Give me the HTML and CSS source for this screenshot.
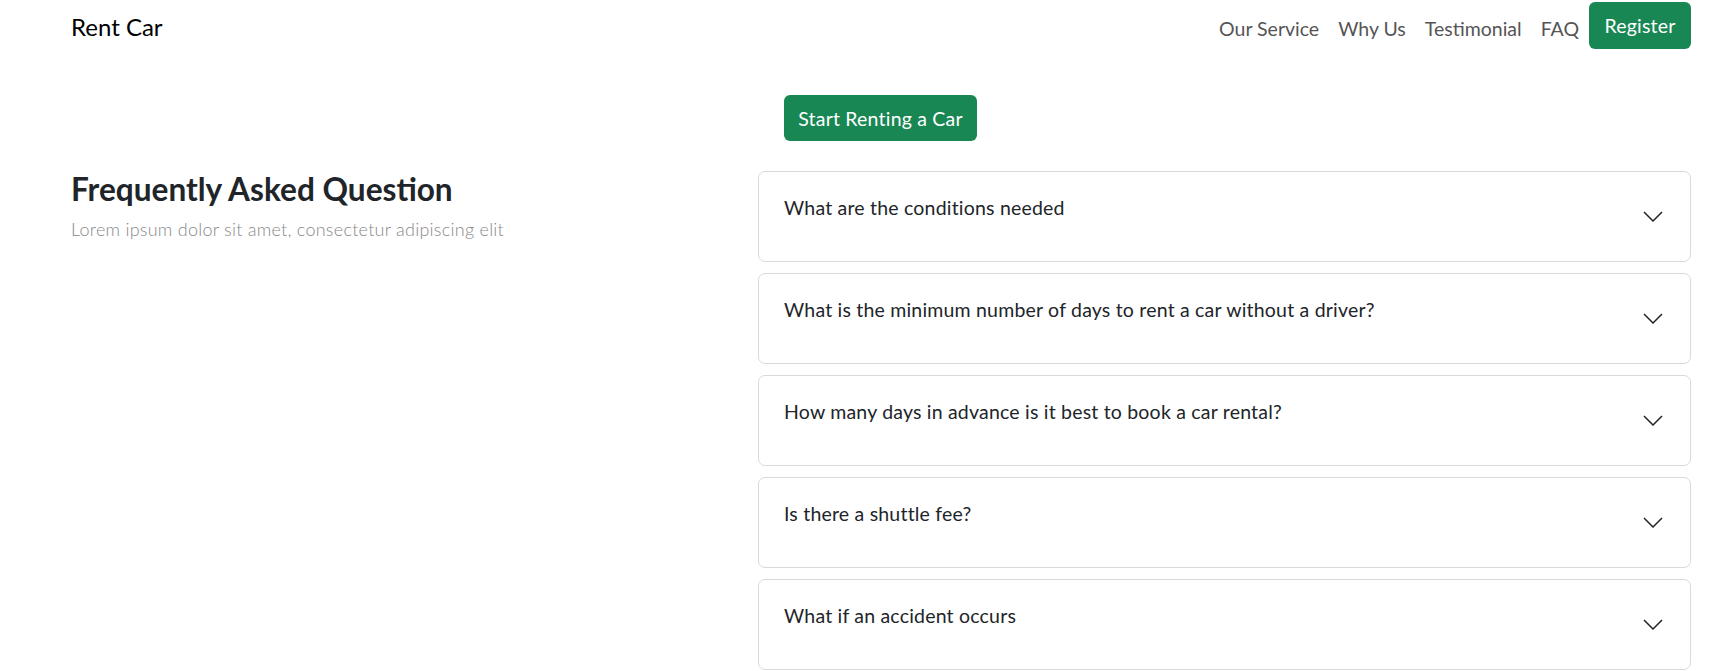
FILE: index.html
```html
<!DOCTYPE html>
<html lang="en">
<head>
<meta charset="utf-8">
<title>Rent Car</title>
<link rel="stylesheet" href="styles.css">
</head>
<body>
<header class="navbar">
  <a class="brand" href="#">Rent Car</a>
  <nav class="nav">
    <a class="nav-link" href="#">Our Service</a>
    <a class="nav-link" href="#">Why Us</a>
    <a class="nav-link" href="#">Testimonial</a>
    <a class="nav-link nav-link-last" href="#">FAQ</a>
    <a class="btn btn-register" href="#">Register</a>
  </nav>
</header>
<main class="page">
  <div class="cta-row">
    <a class="btn btn-cta" href="#">Start Renting a Car</a>
  </div>
  <section class="faq">
    <div class="faq-intro">
      <h2 class="faq-title">Frequently Asked Question</h2>
      <p class="faq-sub">Lorem ipsum dolor sit amet, consectetur adipiscing elit</p>
    </div>
    <div class="faq-list">
      <div class="faq-item"><span class="faq-q">What are the conditions needed</span><svg class="chev" viewBox="0 0 20 11"><path d="M1 1l9 9 9-9"/></svg></div>
      <div class="faq-item"><span class="faq-q">What is the minimum number of days to rent a car without a driver?</span><svg class="chev" viewBox="0 0 20 11"><path d="M1 1l9 9 9-9"/></svg></div>
      <div class="faq-item"><span class="faq-q">How many days in advance is it best to book a car rental?</span><svg class="chev" viewBox="0 0 20 11"><path d="M1 1l9 9 9-9"/></svg></div>
      <div class="faq-item"><span class="faq-q">Is there a shuttle fee?</span><svg class="chev" viewBox="0 0 20 11"><path d="M1 1l9 9 9-9"/></svg></div>
      <div class="faq-item"><span class="faq-q">What if an accident occurs</span><svg class="chev" viewBox="0 0 20 11"><path d="M1 1l9 9 9-9"/></svg></div>
    </div>
  </section>
</main>
</body>
</html>
```

FILE: styles.css
```css
* { box-sizing: border-box; }
body {
  margin: 0;
  font-family: "Lato", "Liberation Sans", sans-serif;
  color: #212529;
  background: #fff;
}
a { text-decoration: none; }
.navbar {
  display: flex;
  justify-content: space-between;
  align-items: center;
  height: 51px;
  padding: 2px 33px 0 71px;
}
.brand {
  color: #000;
  font-size: 24px;
  line-height: 1;
}
.nav {
  display: flex;
  align-items: center;
  gap: 19px;
}
.nav-link {
  color: #555;
  font-size: 19.5px;
  padding-top: 3px;
}
.nav-link-last { margin-right: -9px; }
.btn {
  display: inline-flex;
  align-items: center;
  justify-content: center;
  background: #198754;
  color: #fff;
  border-radius: 6px;
  font-size: 19.5px;
  letter-spacing: 0.2px;
}
.btn-register {
  width: 102px;
  height: 47px;
  margin-top: -2px;
}
.page {
  padding: 0 33px 0 71px;
}
.cta-row {
  padding: 44px 0 0 713px;
}
.btn-cta {
  width: 193px;
  height: 46px;
}
.faq {
  display: grid;
  grid-template-columns: 687px 1fr;
  margin-top: 30px;
}
.faq-title {
  margin: 0;
  font-size: 31.6px;
  font-weight: 700;
  line-height: 36px;
}
.faq-sub {
  margin: 11px 0 0;
  font-size: 18px;
  font-weight: 300;
  letter-spacing: 0.25px;
  color: #888;
}
.faq-list {
  display: flex;
  flex-direction: column;
  gap: 11px;
}
.faq-item {
  display: flex;
  justify-content: space-between;
  align-items: flex-start;
  height: 91px;
  border: 1px solid #dadada;
  border-radius: 7px;
  padding: 24px 27px 0 25px;
}
.faq-q {
  font-size: 19.5px;
  line-height: 24px;
  letter-spacing: 0.2px;
  color: #212529;
}
.chev {
  width: 20px;
  height: 11px;
  margin-top: 15px;
  fill: none;
  stroke: #212529;
  stroke-width: 1.5;
}
```
